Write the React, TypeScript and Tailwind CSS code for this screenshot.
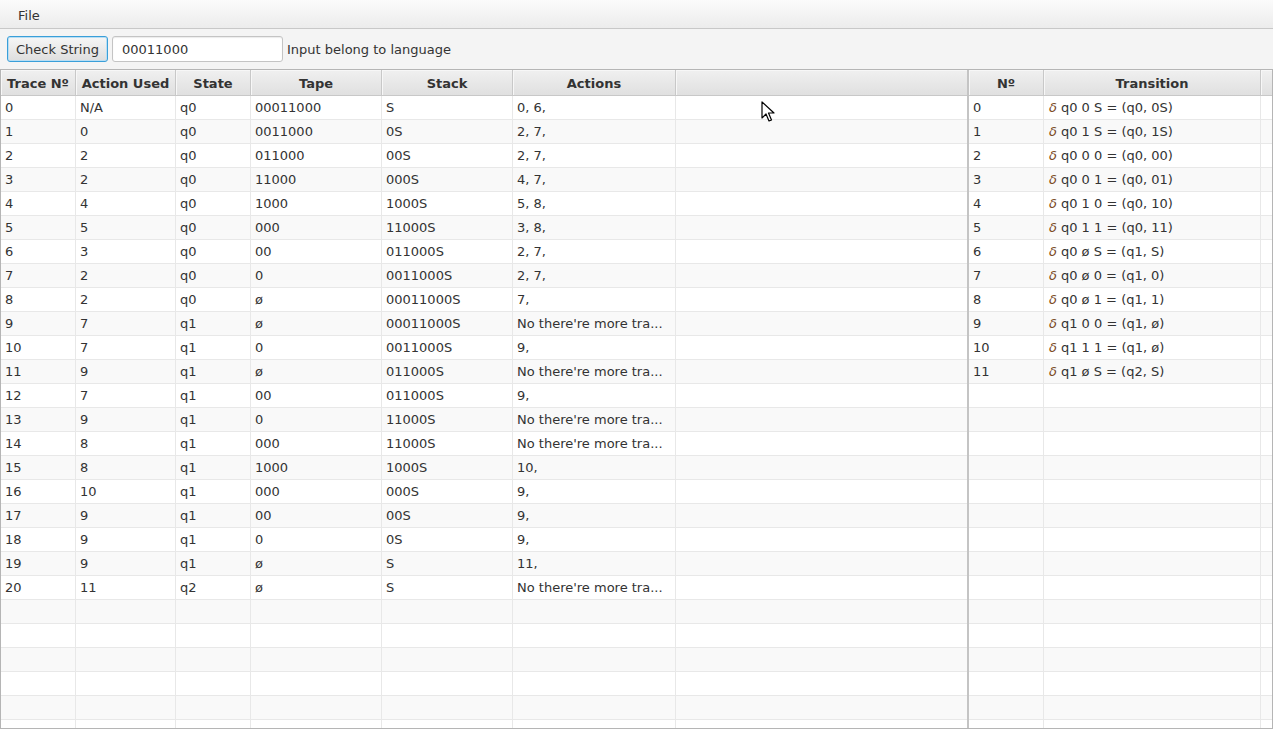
import React from 'react';

const NO_MORE = "No there're more tra...";

const traceRows: string[][] = [
  ['0', 'N/A', 'q0', '00011000', 'S', '0, 6,'],
  ['1', '0', 'q0', '0011000', '0S', '2, 7,'],
  ['2', '2', 'q0', '011000', '00S', '2, 7,'],
  ['3', '2', 'q0', '11000', '000S', '4, 7,'],
  ['4', '4', 'q0', '1000', '1000S', '5, 8,'],
  ['5', '5', 'q0', '000', '11000S', '3, 8,'],
  ['6', '3', 'q0', '00', '011000S', '2, 7,'],
  ['7', '2', 'q0', '0', '0011000S', '2, 7,'],
  ['8', '2', 'q0', 'ø', '00011000S', '7,'],
  ['9', '7', 'q1', 'ø', '00011000S', NO_MORE],
  ['10', '7', 'q1', '0', '0011000S', '9,'],
  ['11', '9', 'q1', 'ø', '011000S', NO_MORE],
  ['12', '7', 'q1', '00', '011000S', '9,'],
  ['13', '9', 'q1', '0', '11000S', NO_MORE],
  ['14', '8', 'q1', '000', '11000S', NO_MORE],
  ['15', '8', 'q1', '1000', '1000S', '10,'],
  ['16', '10', 'q1', '000', '000S', '9,'],
  ['17', '9', 'q1', '00', '00S', '9,'],
  ['18', '9', 'q1', '0', '0S', '9,'],
  ['19', '9', 'q1', 'ø', 'S', '11,'],
  ['20', '11', 'q2', 'ø', 'S', NO_MORE],
];

const transitions: string[] = [
  'q0 0 S = (q0, 0S)',
  'q0 1 S = (q0, 1S)',
  'q0 0 0 = (q0, 00)',
  'q0 0 1 = (q0, 01)',
  'q0 1 0 = (q0, 10)',
  'q0 1 1 = (q0, 11)',
  'q0 ø S = (q1, S)',
  'q0 ø 0 = (q1, 0)',
  'q0 ø 1 = (q1, 1)',
  'q1 0 0 = (q1, ø)',
  'q1 1 1 = (q1, ø)',
  'q1 ø S = (q2, S)',
];

const ROW_COUNT = 27;

const traceCols = [
  { title: 'Trace Nº', w: 'w-[75px]' },
  { title: 'Action Used', w: 'w-[100px]' },
  { title: 'State', w: 'w-[75px]' },
  { title: 'Tape', w: 'w-[131px]' },
  { title: 'Stack', w: 'w-[131px]' },
  { title: 'Actions', w: 'w-[163px]' },
];

const transCols = [
  { title: 'Nº', w: 'w-[75px]' },
  { title: 'Transition', w: 'w-[217px]' },
];

const HeaderCell = ({ title, w }: { title: string; w: string }) => (
  <div className={`${w} shrink-0 h-full flex items-center justify-center pt-[2px] border-r border-[#c8c8c8] font-bold text-[#333333] whitespace-nowrap overflow-hidden shadow-[inset_1px_1px_0_#f7f7f7]`}>
    {title}
  </div>
);

const Header = ({ cols }: { cols: { title: string; w: string }[] }) => (
  <div className="h-[26px] shrink-0 flex border-b border-[#c8c8c8] bg-gradient-to-b from-[#f0f0f0] to-[#e0e0e0]">
    {cols.map((c) => (
      <HeaderCell key={c.title} title={c.title} w={c.w} />
    ))}
    <div className="flex-1 h-full shadow-[inset_1px_1px_0_#f7f7f7]" />
  </div>
);

const Row = ({ index, cols, cells }: { index: number; cols: { w: string }[]; cells?: React.ReactNode[] }) => (
  <div className={`h-[24px] shrink-0 flex border-b border-[#e8e8e8] ${index % 2 === 1 ? 'bg-[#f9f9f9]' : 'bg-white'}`}>
    {cols.map((c, i) => (
      <div key={i} className={`${c.w} shrink-0 h-full flex items-center pl-[4px] border-r border-[#e8e8e8] text-[#333333] whitespace-nowrap overflow-hidden`}>
        {cells ? cells[i] : null}
      </div>
    ))}
    <div className="flex-1 h-full" />
  </div>
);

const Cursor = () => (
  <svg className="absolute left-[761px] top-[101px]" width="14" height="22" viewBox="0 0 14 22">
    <path d="M1 1 L1 17 L5 13 L8 20 L10.5 19 L7.5 12 L13 12 Z" fill="#ffffff" stroke="#000000" strokeWidth="1.2" strokeLinejoin="round" />
  </svg>
);

export default function App() {
  return (
    <div className="relative w-[1273px] h-[729px] overflow-hidden flex flex-col bg-[#f4f4f4] text-[13px] leading-none font-['DejaVu_Sans',_'Liberation_Sans',_sans-serif]">
      {/* Menu bar */}
      <div className="h-[29px] shrink-0 flex items-center pt-[2px] border-b border-[#c8c8c8] bg-gradient-to-b from-[#fbfbfb] to-[#ececec]">
        <span className="ml-[18px] text-[#333333]">File</span>
      </div>

      {/* Toolbar */}
      <div className="h-[40px] shrink-0 flex items-center pl-[7px]">
        <button className="h-[26px] w-[101px] rounded-[3px] border border-[#3a9fd9] bg-gradient-to-b from-[#f6f6f6] to-[#dedede] text-[#333333] shadow-[inset_0_0_0_1px_#b9def3]">
          Check String
        </button>
        <div className="ml-[4px] h-[26px] w-[171px] rounded-[3px] border border-[#c4c4c4] bg-white flex items-center pl-[9px] text-[#333333] shadow-[inset_0_1px_1px_#ececec]">
          00011000
        </div>
        <span className="ml-[4px] text-[#333333]">Input belong to language</span>
      </div>

      {/* Split pane */}
      <div className="flex-1 flex min-h-0 border-t border-[#b5b5b5]">
        {/* Trace table */}
        <div className="w-[967px] shrink-0 flex flex-col border-l border-[#b5b5b5] bg-white overflow-hidden">
          <Header cols={traceCols} />
          {Array.from({ length: ROW_COUNT }).map((_, i) => (
            <Row key={i} index={i} cols={traceCols} cells={traceRows[i]} />
          ))}
        </div>

        {/* Divider */}
        <div className="w-[2px] shrink-0 bg-[#c4c4c4]" />

        {/* Transition table */}
        <div className="flex-1 flex flex-col border-r border-[#b5b5b5] bg-white overflow-hidden">
          <Header cols={transCols} />
          {Array.from({ length: ROW_COUNT }).map((_, i) => (
            <Row
              key={i}
              index={i}
              cols={transCols}
              cells={
                i < transitions.length
                  ? [
                      String(i),
                      <span key="t">
                        <span className="italic text-[#7a4a1e] ml-[1px] mr-[4px]">δ</span>
                        {transitions[i]}
                      </span>,
                    ]
                  : undefined
              }
            />
          ))}
        </div>
      </div>
      <div className="h-[1px] shrink-0 bg-[#b5b5b5]" />

      <Cursor />
    </div>
  );
}
